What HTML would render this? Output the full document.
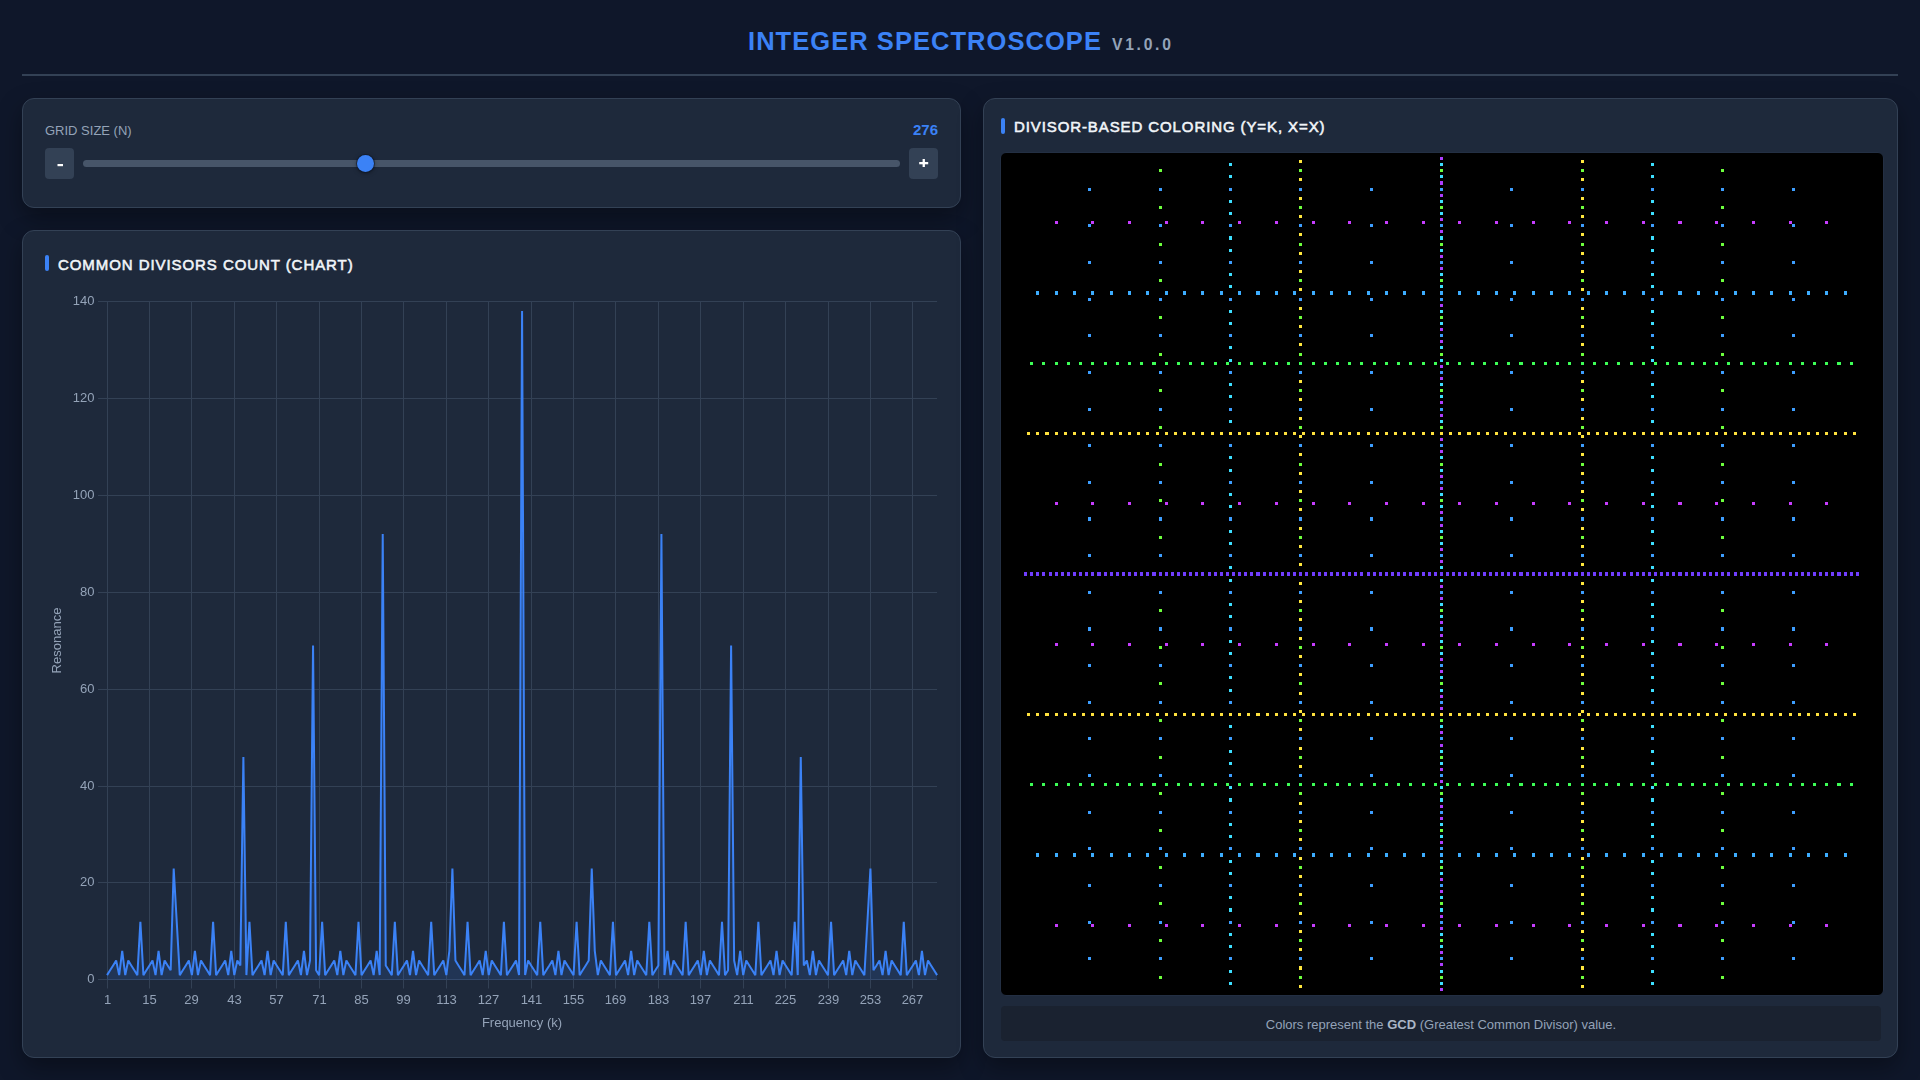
<!DOCTYPE html>
<html><head><meta charset="utf-8"><title>Integer Spectroscope</title>
<style>
*{box-sizing:border-box;margin:0;padding:0}
html,body{width:1920px;height:1080px;overflow:hidden;background:#0f172a;font-family:"Liberation Sans",sans-serif}
.panel{position:absolute;background:#1e293b;border:1px solid #334155;border-radius:12px;box-shadow:0 10px 25px rgba(0,0,0,0.35)}
.hr{position:absolute;left:22px;top:74px;width:1876px;height:2px;background:#334155}
.btn{position:absolute;width:29px;height:31px;background:#334155;border-radius:4px}
.track{position:absolute;left:83px;top:160px;width:817px;height:7px;background:#475569;border-radius:4px}
.thumb{position:absolute;left:357px;top:155px;width:17px;height:17px;border-radius:50%;background:#3b82f6;box-shadow:0 0 0 1px rgba(15,23,42,0.6),0 1px 4px rgba(0,0,0,0.5)}
.canvasbox{position:absolute;left:1000px;top:152px;width:884px;height:844px;background:#000;border:1px solid #232f43;border-radius:6px}
.foot{position:absolute;left:1001px;top:1006px;width:880px;height:35px;background:#1a2230;border-radius:4px}
svg{position:absolute;left:0;top:0}
.tk{font-family:"Liberation Sans",sans-serif;font-size:13px;fill:#94a3b8}
</style></head><body>
<div class="hr"></div>
<div class="panel" style="left:22px;top:98px;width:939px;height:110px"></div>
<div class="panel" style="left:22px;top:230px;width:939px;height:828px"></div>
<div class="panel" style="left:983px;top:98px;width:915px;height:960px"></div>
<div class="btn" style="left:45px;top:148px"></div>
<div class="btn" style="left:909px;top:148px"></div>
<div class="track"></div>
<div class="thumb"></div>
<div class="canvasbox"></div>
<div class="foot"></div>
<svg width="1920" height="1080" viewBox="0 0 1920 1080">
<text x="748" y="50.3" font-family="Liberation Sans" font-weight="bold" font-size="25.5" letter-spacing="1.05" fill="#3b82f6">INTEGER SPECTROSCOPE</text>
<text x="1112" y="50.3" font-family="Liberation Sans" font-weight="bold" font-size="15.7" letter-spacing="2.7" fill="#94a3b8">V1.0.0</text>
<text x="45" y="134.8" font-family="Liberation Sans" font-size="13" fill="#94a3b8">GRID SIZE (N)</text>
<text x="938" y="135" text-anchor="end" font-family="Liberation Sans" font-weight="bold" font-size="15" fill="#3b82f6">276</text>
<rect x="57.5" y="164" width="5.5" height="2.2" fill="#ffffff"/>
<rect x="919.2" y="162" width="9" height="2.3" fill="#ffffff"/>
<rect x="922.6" y="159" width="2.3" height="8" fill="#ffffff"/>
<rect x="45" y="255" width="4" height="16" rx="2" fill="#3b82f6"/>
<text x="58" y="270" font-family="Liberation Sans" font-size="15" letter-spacing="0.93" fill="#f1f5f9" stroke="#f1f5f9" stroke-width="0.55">COMMON DIVISORS COUNT (CHART)</text>
<rect x="1001" y="118" width="4" height="16" rx="2" fill="#3b82f6"/>
<text x="1014" y="132" font-family="Liberation Sans" font-size="15" letter-spacing="0.9" fill="#f1f5f9" stroke="#f1f5f9" stroke-width="0.55">DIVISOR-BASED COLORING (Y=K, X=X)</text>
<text x="1441" y="1029" text-anchor="middle" font-family="Liberation Sans" font-size="13" fill="#94a3b8">Colors represent the <tspan font-weight="bold" fill="#aab6c6">GCD</tspan> (Greatest Common Divisor) value.</text>
</svg>
<svg width="1920" height="1080" viewBox="0 0 1920 1080" style="will-change:transform">
<line x1="98" y1="979.5" x2="937.0882000000001" y2="979.5" stroke="#334155" stroke-width="1"/>
<text x="94.5" y="982.8" text-anchor="end" class="tk">0</text>
<line x1="98" y1="882.5" x2="937.0882000000001" y2="882.5" stroke="#334155" stroke-width="1"/>
<text x="94.5" y="885.8" text-anchor="end" class="tk">20</text>
<line x1="98" y1="786.5" x2="937.0882000000001" y2="786.5" stroke="#334155" stroke-width="1"/>
<text x="94.5" y="789.8" text-anchor="end" class="tk">40</text>
<line x1="98" y1="689.5" x2="937.0882000000001" y2="689.5" stroke="#334155" stroke-width="1"/>
<text x="94.5" y="692.8" text-anchor="end" class="tk">60</text>
<line x1="98" y1="592.5" x2="937.0882000000001" y2="592.5" stroke="#334155" stroke-width="1"/>
<text x="94.5" y="595.8" text-anchor="end" class="tk">80</text>
<line x1="98" y1="495.5" x2="937.0882000000001" y2="495.5" stroke="#334155" stroke-width="1"/>
<text x="94.5" y="498.8" text-anchor="end" class="tk">100</text>
<line x1="98" y1="398.5" x2="937.0882000000001" y2="398.5" stroke="#334155" stroke-width="1"/>
<text x="94.5" y="401.8" text-anchor="end" class="tk">120</text>
<line x1="98" y1="301.5" x2="937.0882000000001" y2="301.5" stroke="#334155" stroke-width="1"/>
<text x="94.5" y="304.8" text-anchor="end" class="tk">140</text>
<line x1="107.5" y1="301.2" x2="107.5" y2="988.5" stroke="#334155" stroke-width="1"/>
<text x="107.5" y="1004" text-anchor="middle" class="tk">1</text>
<line x1="149.5" y1="301.2" x2="149.5" y2="988.5" stroke="#334155" stroke-width="1"/>
<text x="149.5" y="1004" text-anchor="middle" class="tk">15</text>
<line x1="191.5" y1="301.2" x2="191.5" y2="988.5" stroke="#334155" stroke-width="1"/>
<text x="191.5" y="1004" text-anchor="middle" class="tk">29</text>
<line x1="234.5" y1="301.2" x2="234.5" y2="988.5" stroke="#334155" stroke-width="1"/>
<text x="234.5" y="1004" text-anchor="middle" class="tk">43</text>
<line x1="276.5" y1="301.2" x2="276.5" y2="988.5" stroke="#334155" stroke-width="1"/>
<text x="276.5" y="1004" text-anchor="middle" class="tk">57</text>
<line x1="319.5" y1="301.2" x2="319.5" y2="988.5" stroke="#334155" stroke-width="1"/>
<text x="319.5" y="1004" text-anchor="middle" class="tk">71</text>
<line x1="361.5" y1="301.2" x2="361.5" y2="988.5" stroke="#334155" stroke-width="1"/>
<text x="361.5" y="1004" text-anchor="middle" class="tk">85</text>
<line x1="403.5" y1="301.2" x2="403.5" y2="988.5" stroke="#334155" stroke-width="1"/>
<text x="403.5" y="1004" text-anchor="middle" class="tk">99</text>
<line x1="446.5" y1="301.2" x2="446.5" y2="988.5" stroke="#334155" stroke-width="1"/>
<text x="446.5" y="1004" text-anchor="middle" class="tk">113</text>
<line x1="488.5" y1="301.2" x2="488.5" y2="988.5" stroke="#334155" stroke-width="1"/>
<text x="488.5" y="1004" text-anchor="middle" class="tk">127</text>
<line x1="531.5" y1="301.2" x2="531.5" y2="988.5" stroke="#334155" stroke-width="1"/>
<text x="531.5" y="1004" text-anchor="middle" class="tk">141</text>
<line x1="573.5" y1="301.2" x2="573.5" y2="988.5" stroke="#334155" stroke-width="1"/>
<text x="573.5" y="1004" text-anchor="middle" class="tk">155</text>
<line x1="615.5" y1="301.2" x2="615.5" y2="988.5" stroke="#334155" stroke-width="1"/>
<text x="615.5" y="1004" text-anchor="middle" class="tk">169</text>
<line x1="658.5" y1="301.2" x2="658.5" y2="988.5" stroke="#334155" stroke-width="1"/>
<text x="658.5" y="1004" text-anchor="middle" class="tk">183</text>
<line x1="700.5" y1="301.2" x2="700.5" y2="988.5" stroke="#334155" stroke-width="1"/>
<text x="700.5" y="1004" text-anchor="middle" class="tk">197</text>
<line x1="743.5" y1="301.2" x2="743.5" y2="988.5" stroke="#334155" stroke-width="1"/>
<text x="743.5" y="1004" text-anchor="middle" class="tk">211</text>
<line x1="785.5" y1="301.2" x2="785.5" y2="988.5" stroke="#334155" stroke-width="1"/>
<text x="785.5" y="1004" text-anchor="middle" class="tk">225</text>
<line x1="828.5" y1="301.2" x2="828.5" y2="988.5" stroke="#334155" stroke-width="1"/>
<text x="828.5" y="1004" text-anchor="middle" class="tk">239</text>
<line x1="870.5" y1="301.2" x2="870.5" y2="988.5" stroke="#334155" stroke-width="1"/>
<text x="870.5" y="1004" text-anchor="middle" class="tk">253</text>
<line x1="912.5" y1="301.2" x2="912.5" y2="988.5" stroke="#334155" stroke-width="1"/>
<text x="912.5" y="1004" text-anchor="middle" class="tk">267</text>
<polygon points="107.06,979.95 107.06,975.10 110.09,970.25 113.12,965.41 116.15,960.56 119.18,975.10 122.21,950.86 125.24,975.10 128.27,960.56 131.29,965.41 134.32,970.25 137.35,975.10 140.38,921.77 143.41,975.10 146.44,970.25 149.47,965.41 152.50,960.56 155.53,975.10 158.56,950.86 161.59,975.10 164.62,960.56 167.65,965.41 170.68,970.25 173.70,868.44 176.73,921.77 179.76,975.10 182.79,970.25 185.82,965.41 188.85,960.56 191.88,975.10 194.91,950.86 197.94,975.10 200.97,960.56 204.00,965.41 207.03,970.25 210.06,975.10 213.09,921.77 216.11,975.10 219.14,970.25 222.17,965.41 225.20,960.56 228.23,975.10 231.26,950.86 234.29,975.10 237.32,960.56 240.35,965.41 243.38,756.93 246.41,975.10 249.44,921.77 252.47,975.10 255.50,970.25 258.53,965.41 261.55,960.56 264.58,975.10 267.61,950.86 270.64,975.10 273.67,960.56 276.70,965.41 279.73,970.25 282.76,975.10 285.79,921.77 288.82,975.10 291.85,970.25 294.88,965.41 297.91,960.56 300.94,975.10 303.96,950.86 306.99,975.10 310.02,960.56 313.05,645.42 316.08,970.25 319.11,975.10 322.14,921.77 325.17,975.10 328.20,970.25 331.23,965.41 334.26,960.56 337.29,975.10 340.32,950.86 343.35,975.10 346.37,960.56 349.40,965.41 352.43,970.25 355.46,975.10 358.49,921.77 361.52,975.10 364.55,970.25 367.58,965.41 370.61,960.56 373.64,975.10 376.67,950.86 379.70,975.10 382.73,533.91 385.76,965.41 388.78,970.25 391.81,975.10 394.84,921.77 397.87,975.10 400.90,970.25 403.93,965.41 406.96,960.56 409.99,975.10 413.02,950.86 416.05,975.10 419.08,960.56 422.11,965.41 425.14,970.25 428.17,975.10 431.20,921.77 434.22,975.10 437.25,970.25 440.28,965.41 443.31,960.56 446.34,975.10 449.37,950.86 452.40,868.44 455.43,960.56 458.46,965.41 461.49,970.25 464.52,975.10 467.55,921.77 470.58,975.10 473.61,970.25 476.63,965.41 479.66,960.56 482.69,975.10 485.72,950.86 488.75,975.10 491.78,960.56 494.81,965.41 497.84,970.25 500.87,975.10 503.90,921.77 506.93,975.10 509.96,970.25 512.99,965.41 516.02,960.56 519.04,975.10 522.07,310.90 525.10,975.10 528.13,960.56 531.16,965.41 534.19,970.25 537.22,975.10 540.25,921.77 543.28,975.10 546.31,970.25 549.34,965.41 552.37,960.56 555.40,975.10 558.43,950.86 561.46,975.10 564.48,960.56 567.51,965.41 570.54,970.25 573.57,975.10 576.60,921.77 579.63,975.10 582.66,970.25 585.69,965.41 588.72,960.56 591.75,868.44 594.78,950.86 597.81,975.10 600.84,960.56 603.87,965.41 606.89,970.25 609.92,975.10 612.95,921.77 615.98,975.10 619.01,970.25 622.04,965.41 625.07,960.56 628.10,975.10 631.13,950.86 634.16,975.10 637.19,960.56 640.22,965.41 643.25,970.25 646.28,975.10 649.30,921.77 652.33,975.10 655.36,970.25 658.39,965.41 661.42,533.91 664.45,975.10 667.48,950.86 670.51,975.10 673.54,960.56 676.57,965.41 679.60,970.25 682.63,975.10 685.66,921.77 688.69,975.10 691.71,970.25 694.74,965.41 697.77,960.56 700.80,975.10 703.83,950.86 706.86,975.10 709.89,960.56 712.92,965.41 715.95,970.25 718.98,975.10 722.01,921.77 725.04,975.10 728.07,970.25 731.10,645.42 734.13,960.56 737.15,975.10 740.18,950.86 743.21,975.10 746.24,960.56 749.27,965.41 752.30,970.25 755.33,975.10 758.36,921.77 761.39,975.10 764.42,970.25 767.45,965.41 770.48,960.56 773.51,975.10 776.54,950.86 779.56,975.10 782.59,960.56 785.62,965.41 788.65,970.25 791.68,975.10 794.71,921.77 797.74,975.10 800.77,756.93 803.80,965.41 806.83,960.56 809.86,975.10 812.89,950.86 815.92,975.10 818.95,960.56 821.97,965.41 825.00,970.25 828.03,975.10 831.06,921.77 834.09,975.10 837.12,970.25 840.15,965.41 843.18,960.56 846.21,975.10 849.24,950.86 852.27,975.10 855.30,960.56 858.33,965.41 861.36,970.25 864.39,975.10 867.41,921.77 870.44,868.44 873.47,970.25 876.50,965.41 879.53,960.56 882.56,975.10 885.59,950.86 888.62,975.10 891.65,960.56 894.68,965.41 897.71,970.25 900.74,975.10 903.77,921.77 906.80,975.10 909.82,970.25 912.85,965.41 915.88,960.56 918.91,975.10 921.94,950.86 924.97,975.10 928.00,960.56 931.03,965.41 934.06,970.25 937.09,975.10 937.09,979.95" fill="rgba(59,130,246,0.14)"/>
<polyline points="107.06,975.10 110.09,970.25 113.12,965.41 116.15,960.56 119.18,975.10 122.21,950.86 125.24,975.10 128.27,960.56 131.29,965.41 134.32,970.25 137.35,975.10 140.38,921.77 143.41,975.10 146.44,970.25 149.47,965.41 152.50,960.56 155.53,975.10 158.56,950.86 161.59,975.10 164.62,960.56 167.65,965.41 170.68,970.25 173.70,868.44 176.73,921.77 179.76,975.10 182.79,970.25 185.82,965.41 188.85,960.56 191.88,975.10 194.91,950.86 197.94,975.10 200.97,960.56 204.00,965.41 207.03,970.25 210.06,975.10 213.09,921.77 216.11,975.10 219.14,970.25 222.17,965.41 225.20,960.56 228.23,975.10 231.26,950.86 234.29,975.10 237.32,960.56 240.35,965.41 243.38,756.93 246.41,975.10 249.44,921.77 252.47,975.10 255.50,970.25 258.53,965.41 261.55,960.56 264.58,975.10 267.61,950.86 270.64,975.10 273.67,960.56 276.70,965.41 279.73,970.25 282.76,975.10 285.79,921.77 288.82,975.10 291.85,970.25 294.88,965.41 297.91,960.56 300.94,975.10 303.96,950.86 306.99,975.10 310.02,960.56 313.05,645.42 316.08,970.25 319.11,975.10 322.14,921.77 325.17,975.10 328.20,970.25 331.23,965.41 334.26,960.56 337.29,975.10 340.32,950.86 343.35,975.10 346.37,960.56 349.40,965.41 352.43,970.25 355.46,975.10 358.49,921.77 361.52,975.10 364.55,970.25 367.58,965.41 370.61,960.56 373.64,975.10 376.67,950.86 379.70,975.10 382.73,533.91 385.76,965.41 388.78,970.25 391.81,975.10 394.84,921.77 397.87,975.10 400.90,970.25 403.93,965.41 406.96,960.56 409.99,975.10 413.02,950.86 416.05,975.10 419.08,960.56 422.11,965.41 425.14,970.25 428.17,975.10 431.20,921.77 434.22,975.10 437.25,970.25 440.28,965.41 443.31,960.56 446.34,975.10 449.37,950.86 452.40,868.44 455.43,960.56 458.46,965.41 461.49,970.25 464.52,975.10 467.55,921.77 470.58,975.10 473.61,970.25 476.63,965.41 479.66,960.56 482.69,975.10 485.72,950.86 488.75,975.10 491.78,960.56 494.81,965.41 497.84,970.25 500.87,975.10 503.90,921.77 506.93,975.10 509.96,970.25 512.99,965.41 516.02,960.56 519.04,975.10 522.07,310.90 525.10,975.10 528.13,960.56 531.16,965.41 534.19,970.25 537.22,975.10 540.25,921.77 543.28,975.10 546.31,970.25 549.34,965.41 552.37,960.56 555.40,975.10 558.43,950.86 561.46,975.10 564.48,960.56 567.51,965.41 570.54,970.25 573.57,975.10 576.60,921.77 579.63,975.10 582.66,970.25 585.69,965.41 588.72,960.56 591.75,868.44 594.78,950.86 597.81,975.10 600.84,960.56 603.87,965.41 606.89,970.25 609.92,975.10 612.95,921.77 615.98,975.10 619.01,970.25 622.04,965.41 625.07,960.56 628.10,975.10 631.13,950.86 634.16,975.10 637.19,960.56 640.22,965.41 643.25,970.25 646.28,975.10 649.30,921.77 652.33,975.10 655.36,970.25 658.39,965.41 661.42,533.91 664.45,975.10 667.48,950.86 670.51,975.10 673.54,960.56 676.57,965.41 679.60,970.25 682.63,975.10 685.66,921.77 688.69,975.10 691.71,970.25 694.74,965.41 697.77,960.56 700.80,975.10 703.83,950.86 706.86,975.10 709.89,960.56 712.92,965.41 715.95,970.25 718.98,975.10 722.01,921.77 725.04,975.10 728.07,970.25 731.10,645.42 734.13,960.56 737.15,975.10 740.18,950.86 743.21,975.10 746.24,960.56 749.27,965.41 752.30,970.25 755.33,975.10 758.36,921.77 761.39,975.10 764.42,970.25 767.45,965.41 770.48,960.56 773.51,975.10 776.54,950.86 779.56,975.10 782.59,960.56 785.62,965.41 788.65,970.25 791.68,975.10 794.71,921.77 797.74,975.10 800.77,756.93 803.80,965.41 806.83,960.56 809.86,975.10 812.89,950.86 815.92,975.10 818.95,960.56 821.97,965.41 825.00,970.25 828.03,975.10 831.06,921.77 834.09,975.10 837.12,970.25 840.15,965.41 843.18,960.56 846.21,975.10 849.24,950.86 852.27,975.10 855.30,960.56 858.33,965.41 861.36,970.25 864.39,975.10 867.41,921.77 870.44,868.44 873.47,970.25 876.50,965.41 879.53,960.56 882.56,975.10 885.59,950.86 888.62,975.10 891.65,960.56 894.68,965.41 897.71,970.25 900.74,975.10 903.77,921.77 906.80,975.10 909.82,970.25 912.85,965.41 915.88,960.56 918.91,975.10 921.94,950.86 924.97,975.10 928.00,960.56 931.03,965.41 934.06,970.25 937.09,975.10" fill="none" stroke="#3b82f6" stroke-width="2" stroke-linejoin="bevel"/>
<text x="522" y="1027" text-anchor="middle" class="tk">Frequency (k)</text>
<text transform="translate(61,640.5) rotate(-90)" text-anchor="middle" class="tk">Resonance</text>
</svg>
<svg width="1920" height="1080" viewBox="0 0 1920 1080">
<g shape-rendering="crispEdges">
<path fill="#ae3dff" d="M1440 157h3v3h-3zM1440 181h3v4h-3zM1440 194h3v3h-3zM1440 218h3v3h-3zM1440 230h3v3h-3zM1440 255h3v3h-3zM1440 267h3v3h-3zM1440 304h3v3h-3zM1440 328h3v3h-3zM1440 340h3v3h-3zM1440 365h3v3h-3zM1440 377h3v3h-3zM1440 401h3v3h-3zM1440 414h3v3h-3zM1440 438h3v3h-3zM1440 450h3v3h-3zM1440 475h3v3h-3zM1440 487h3v3h-3zM1440 511h3v3h-3zM1440 524h3v3h-3zM1440 548h3v3h-3zM1440 560h3v3h-3zM1440 585h3v3h-3zM1440 597h3v3h-3zM1440 621h3v3h-3zM1440 634h3v3h-3zM1440 658h3v3h-3zM1440 670h3v3h-3zM1440 695h3v3h-3zM1440 707h3v3h-3zM1440 731h3v3h-3zM1440 744h3v3h-3zM1440 768h3v3h-3zM1440 780h3v3h-3zM1440 805h3v3h-3zM1440 817h3v3h-3zM1440 841h3v3h-3zM1440 878h3v3h-3zM1440 890h3v3h-3zM1440 915h3v3h-3zM1440 927h3v3h-3zM1440 951h3v3h-3zM1440 963h3v3h-3zM1440 988h3v3h-3z"/>
<path fill="#ffe73d" d="M1299 160h3v3h-3zM1581 160h3v3h-3zM1299 178h3v3h-3zM1581 178h3v3h-3zM1299 197h3v3h-3zM1581 197h3v3h-3zM1299 215h3v3h-3zM1581 215h3v3h-3zM1299 233h3v3h-3zM1581 233h3v3h-3zM1299 252h3v3h-3zM1581 252h3v3h-3zM1299 270h3v3h-3zM1581 270h3v3h-3zM1299 288h3v3h-3zM1581 288h3v3h-3zM1299 307h3v3h-3zM1581 307h3v3h-3zM1299 325h3v3h-3zM1581 325h3v3h-3zM1299 343h3v3h-3zM1581 343h3v3h-3zM1299 380h3v3h-3zM1581 380h3v3h-3zM1299 398h3v3h-3zM1581 398h3v3h-3zM1299 417h3v3h-3zM1581 417h3v3h-3zM1299 435h3v3h-3zM1581 435h3v3h-3zM1299 453h3v3h-3zM1581 453h3v3h-3zM1299 472h3v3h-3zM1581 472h3v3h-3zM1299 490h3v3h-3zM1581 490h3v3h-3zM1299 508h3v3h-3zM1581 508h3v3h-3zM1299 527h3v3h-3zM1581 527h3v3h-3zM1299 545h3v3h-3zM1581 545h3v3h-3zM1299 563h3v3h-3zM1581 563h3v3h-3zM1299 582h3v3h-3zM1581 582h3v3h-3zM1299 600h3v3h-3zM1581 600h3v3h-3zM1299 618h3v3h-3zM1581 618h3v3h-3zM1299 637h3v3h-3zM1581 637h3v3h-3zM1299 655h3v3h-3zM1581 655h3v3h-3zM1299 673h3v3h-3zM1581 673h3v3h-3zM1299 692h3v3h-3zM1581 692h3v3h-3zM1299 710h3v3h-3zM1581 710h3v3h-3zM1299 728h3v3h-3zM1581 728h3v3h-3zM1299 747h3v3h-3zM1581 747h3v3h-3zM1299 765h3v3h-3zM1581 765h3v3h-3zM1299 802h3v3h-3zM1581 802h3v3h-3zM1299 820h3v3h-3zM1581 820h3v3h-3zM1299 838h3v3h-3zM1581 838h3v3h-3zM1299 857h3v3h-3zM1581 857h3v3h-3zM1299 875h3v3h-3zM1581 875h3v3h-3zM1299 893h3v3h-3zM1581 893h3v3h-3zM1299 912h3v3h-3zM1581 912h3v3h-3zM1299 930h3v3h-3zM1581 930h3v3h-3zM1299 948h3v3h-3zM1581 948h3v3h-3zM1299 966h3v4h-3zM1581 966h3v4h-3zM1299 985h3v3h-3zM1581 985h3v3h-3z"/>
<path fill="#3ddfff" d="M1229 163h3v3h-3zM1440 163h3v3h-3zM1651 163h3v3h-3zM1229 175h3v3h-3zM1440 175h3v3h-3zM1651 175h3v3h-3zM1229 200h3v3h-3zM1440 200h3v3h-3zM1651 200h3v3h-3zM1229 212h3v3h-3zM1440 212h3v3h-3zM1651 212h3v3h-3zM1229 236h3v4h-3zM1440 236h3v4h-3zM1651 236h3v4h-3zM1229 249h3v3h-3zM1440 249h3v3h-3zM1651 249h3v3h-3zM1229 273h3v3h-3zM1440 273h3v3h-3zM1651 273h3v3h-3zM1229 285h3v3h-3zM1440 285h3v3h-3zM1651 285h3v3h-3zM1229 310h3v3h-3zM1440 310h3v3h-3zM1651 310h3v3h-3zM1229 322h3v3h-3zM1440 322h3v3h-3zM1651 322h3v3h-3zM1229 346h3v3h-3zM1440 346h3v3h-3zM1651 346h3v3h-3zM1229 359h3v3h-3zM1440 359h3v3h-3zM1651 359h3v3h-3zM1229 383h3v3h-3zM1440 383h3v3h-3zM1651 383h3v3h-3zM1229 395h3v3h-3zM1440 395h3v3h-3zM1651 395h3v3h-3zM1229 420h3v3h-3zM1440 420h3v3h-3zM1651 420h3v3h-3zM1229 456h3v3h-3zM1440 456h3v3h-3zM1651 456h3v3h-3zM1229 469h3v3h-3zM1440 469h3v3h-3zM1651 469h3v3h-3zM1229 493h3v3h-3zM1440 493h3v3h-3zM1651 493h3v3h-3zM1229 505h3v3h-3zM1440 505h3v3h-3zM1651 505h3v3h-3zM1229 530h3v3h-3zM1440 530h3v3h-3zM1651 530h3v3h-3zM1229 542h3v3h-3zM1440 542h3v3h-3zM1651 542h3v3h-3zM1229 566h3v3h-3zM1440 566h3v3h-3zM1651 566h3v3h-3zM1229 579h3v3h-3zM1440 579h3v3h-3zM1651 579h3v3h-3zM1229 603h3v3h-3zM1440 603h3v3h-3zM1651 603h3v3h-3zM1229 615h3v3h-3zM1440 615h3v3h-3zM1651 615h3v3h-3zM1229 640h3v3h-3zM1440 640h3v3h-3zM1651 640h3v3h-3zM1229 652h3v3h-3zM1440 652h3v3h-3zM1651 652h3v3h-3zM1229 676h3v3h-3zM1440 676h3v3h-3zM1651 676h3v3h-3zM1229 689h3v3h-3zM1440 689h3v3h-3zM1651 689h3v3h-3zM1229 725h3v3h-3zM1440 725h3v3h-3zM1651 725h3v3h-3zM1229 750h3v3h-3zM1440 750h3v3h-3zM1651 750h3v3h-3zM1229 762h3v3h-3zM1440 762h3v3h-3zM1651 762h3v3h-3zM1229 786h3v3h-3zM1440 786h3v3h-3zM1651 786h3v3h-3zM1229 798h3v4h-3zM1440 798h3v4h-3zM1651 798h3v4h-3zM1229 823h3v3h-3zM1440 823h3v3h-3zM1651 823h3v3h-3zM1229 835h3v3h-3zM1440 835h3v3h-3zM1651 835h3v3h-3zM1229 860h3v3h-3zM1440 860h3v3h-3zM1651 860h3v3h-3zM1229 872h3v3h-3zM1440 872h3v3h-3zM1651 872h3v3h-3zM1229 896h3v3h-3zM1440 896h3v3h-3zM1651 896h3v3h-3zM1229 908h3v4h-3zM1440 908h3v4h-3zM1651 908h3v4h-3zM1229 933h3v3h-3zM1440 933h3v3h-3zM1651 933h3v3h-3zM1229 945h3v3h-3zM1440 945h3v3h-3zM1651 945h3v3h-3zM1229 970h3v3h-3zM1440 970h3v3h-3zM1651 970h3v3h-3zM1229 982h3v3h-3zM1440 982h3v3h-3zM1651 982h3v3h-3z"/>
<path fill="#6dff3d" d="M1159 169h3v3h-3zM1299 169h3v3h-3zM1440 169h3v3h-3zM1581 169h3v3h-3zM1721 169h3v3h-3zM1159 206h3v3h-3zM1299 206h3v3h-3zM1440 206h3v3h-3zM1581 206h3v3h-3zM1721 206h3v3h-3zM1159 243h3v3h-3zM1299 243h3v3h-3zM1440 243h3v3h-3zM1581 243h3v3h-3zM1721 243h3v3h-3zM1159 279h3v3h-3zM1299 279h3v3h-3zM1440 279h3v3h-3zM1581 279h3v3h-3zM1721 279h3v3h-3zM1159 316h3v3h-3zM1299 316h3v3h-3zM1440 316h3v3h-3zM1581 316h3v3h-3zM1721 316h3v3h-3zM1159 353h3v3h-3zM1299 353h3v3h-3zM1440 353h3v3h-3zM1581 353h3v3h-3zM1721 353h3v3h-3zM1159 389h3v3h-3zM1299 389h3v3h-3zM1440 389h3v3h-3zM1581 389h3v3h-3zM1721 389h3v3h-3zM1159 426h3v3h-3zM1299 426h3v3h-3zM1440 426h3v3h-3zM1581 426h3v3h-3zM1721 426h3v3h-3zM1159 463h3v3h-3zM1299 463h3v3h-3zM1440 463h3v3h-3zM1581 463h3v3h-3zM1721 463h3v3h-3zM1159 499h3v3h-3zM1299 499h3v3h-3zM1440 499h3v3h-3zM1581 499h3v3h-3zM1721 499h3v3h-3zM1159 536h3v3h-3zM1299 536h3v3h-3zM1440 536h3v3h-3zM1581 536h3v3h-3zM1721 536h3v3h-3zM1159 609h3v3h-3zM1299 609h3v3h-3zM1440 609h3v3h-3zM1581 609h3v3h-3zM1721 609h3v3h-3zM1159 646h3v3h-3zM1299 646h3v3h-3zM1440 646h3v3h-3zM1581 646h3v3h-3zM1721 646h3v3h-3zM1159 682h3v3h-3zM1299 682h3v3h-3zM1440 682h3v3h-3zM1581 682h3v3h-3zM1721 682h3v3h-3zM1159 719h3v3h-3zM1299 719h3v3h-3zM1440 719h3v3h-3zM1581 719h3v3h-3zM1721 719h3v3h-3zM1159 756h3v3h-3zM1299 756h3v3h-3zM1440 756h3v3h-3zM1581 756h3v3h-3zM1721 756h3v3h-3zM1159 792h3v3h-3zM1299 792h3v3h-3zM1440 792h3v3h-3zM1581 792h3v3h-3zM1721 792h3v3h-3zM1159 829h3v3h-3zM1299 829h3v3h-3zM1440 829h3v3h-3zM1581 829h3v3h-3zM1721 829h3v3h-3zM1159 866h3v3h-3zM1299 866h3v3h-3zM1440 866h3v3h-3zM1581 866h3v3h-3zM1721 866h3v3h-3zM1159 902h3v3h-3zM1299 902h3v3h-3zM1440 902h3v3h-3zM1581 902h3v3h-3zM1721 902h3v3h-3zM1159 939h3v3h-3zM1299 939h3v3h-3zM1440 939h3v3h-3zM1581 939h3v3h-3zM1721 939h3v3h-3zM1159 976h3v3h-3zM1299 976h3v3h-3zM1440 976h3v3h-3zM1581 976h3v3h-3zM1721 976h3v3h-3z"/>
<path fill="#3d9eff" d="M1088 188h3v3h-3zM1159 188h3v3h-3zM1229 188h3v3h-3zM1299 188h3v3h-3zM1370 188h3v3h-3zM1440 188h3v3h-3zM1510 188h3v3h-3zM1581 188h3v3h-3zM1651 188h3v3h-3zM1721 188h3v3h-3zM1792 188h3v3h-3zM1088 224h3v3h-3zM1159 224h3v3h-3zM1229 224h3v3h-3zM1299 224h3v3h-3zM1370 224h3v3h-3zM1440 224h3v3h-3zM1510 224h3v3h-3zM1581 224h3v3h-3zM1651 224h3v3h-3zM1721 224h3v3h-3zM1792 224h3v3h-3zM1088 261h3v3h-3zM1159 261h3v3h-3zM1229 261h3v3h-3zM1299 261h3v3h-3zM1370 261h3v3h-3zM1440 261h3v3h-3zM1510 261h3v3h-3zM1581 261h3v3h-3zM1651 261h3v3h-3zM1721 261h3v3h-3zM1792 261h3v3h-3zM1088 298h3v3h-3zM1159 298h3v3h-3zM1229 298h3v3h-3zM1299 298h3v3h-3zM1370 298h3v3h-3zM1440 298h3v3h-3zM1510 298h3v3h-3zM1581 298h3v3h-3zM1651 298h3v3h-3zM1721 298h3v3h-3zM1792 298h3v3h-3zM1088 334h3v3h-3zM1159 334h3v3h-3zM1229 334h3v3h-3zM1299 334h3v3h-3zM1370 334h3v3h-3zM1440 334h3v3h-3zM1510 334h3v3h-3zM1581 334h3v3h-3zM1651 334h3v3h-3zM1721 334h3v3h-3zM1792 334h3v3h-3zM1088 371h3v3h-3zM1159 371h3v3h-3zM1229 371h3v3h-3zM1299 371h3v3h-3zM1370 371h3v3h-3zM1440 371h3v3h-3zM1510 371h3v3h-3zM1581 371h3v3h-3zM1651 371h3v3h-3zM1721 371h3v3h-3zM1792 371h3v3h-3zM1088 408h3v3h-3zM1159 408h3v3h-3zM1229 408h3v3h-3zM1299 408h3v3h-3zM1370 408h3v3h-3zM1440 408h3v3h-3zM1510 408h3v3h-3zM1581 408h3v3h-3zM1651 408h3v3h-3zM1721 408h3v3h-3zM1792 408h3v3h-3zM1088 444h3v3h-3zM1159 444h3v3h-3zM1229 444h3v3h-3zM1299 444h3v3h-3zM1370 444h3v3h-3zM1440 444h3v3h-3zM1510 444h3v3h-3zM1581 444h3v3h-3zM1651 444h3v3h-3zM1721 444h3v3h-3zM1792 444h3v3h-3zM1088 481h3v3h-3zM1159 481h3v3h-3zM1229 481h3v3h-3zM1299 481h3v3h-3zM1370 481h3v3h-3zM1440 481h3v3h-3zM1510 481h3v3h-3zM1581 481h3v3h-3zM1651 481h3v3h-3zM1721 481h3v3h-3zM1792 481h3v3h-3zM1088 517h3v4h-3zM1159 517h3v4h-3zM1229 517h3v4h-3zM1299 517h3v4h-3zM1370 517h3v4h-3zM1440 517h3v4h-3zM1510 517h3v4h-3zM1581 517h3v4h-3zM1651 517h3v4h-3zM1721 517h3v4h-3zM1792 517h3v4h-3zM1088 554h3v3h-3zM1159 554h3v3h-3zM1229 554h3v3h-3zM1299 554h3v3h-3zM1370 554h3v3h-3zM1440 554h3v3h-3zM1510 554h3v3h-3zM1581 554h3v3h-3zM1651 554h3v3h-3zM1721 554h3v3h-3zM1792 554h3v3h-3zM1088 591h3v3h-3zM1159 591h3v3h-3zM1229 591h3v3h-3zM1299 591h3v3h-3zM1370 591h3v3h-3zM1440 591h3v3h-3zM1510 591h3v3h-3zM1581 591h3v3h-3zM1651 591h3v3h-3zM1721 591h3v3h-3zM1792 591h3v3h-3zM1088 627h3v4h-3zM1159 627h3v4h-3zM1229 627h3v4h-3zM1299 627h3v4h-3zM1370 627h3v4h-3zM1440 627h3v4h-3zM1510 627h3v4h-3zM1581 627h3v4h-3zM1651 627h3v4h-3zM1721 627h3v4h-3zM1792 627h3v4h-3zM1088 664h3v3h-3zM1159 664h3v3h-3zM1229 664h3v3h-3zM1299 664h3v3h-3zM1370 664h3v3h-3zM1440 664h3v3h-3zM1510 664h3v3h-3zM1581 664h3v3h-3zM1651 664h3v3h-3zM1721 664h3v3h-3zM1792 664h3v3h-3zM1088 701h3v3h-3zM1159 701h3v3h-3zM1229 701h3v3h-3zM1299 701h3v3h-3zM1370 701h3v3h-3zM1440 701h3v3h-3zM1510 701h3v3h-3zM1581 701h3v3h-3zM1651 701h3v3h-3zM1721 701h3v3h-3zM1792 701h3v3h-3zM1088 737h3v3h-3zM1159 737h3v3h-3zM1229 737h3v3h-3zM1299 737h3v3h-3zM1370 737h3v3h-3zM1440 737h3v3h-3zM1510 737h3v3h-3zM1581 737h3v3h-3zM1651 737h3v3h-3zM1721 737h3v3h-3zM1792 737h3v3h-3zM1088 774h3v3h-3zM1159 774h3v3h-3zM1229 774h3v3h-3zM1299 774h3v3h-3zM1370 774h3v3h-3zM1440 774h3v3h-3zM1510 774h3v3h-3zM1581 774h3v3h-3zM1651 774h3v3h-3zM1721 774h3v3h-3zM1792 774h3v3h-3zM1088 811h3v3h-3zM1159 811h3v3h-3zM1229 811h3v3h-3zM1299 811h3v3h-3zM1370 811h3v3h-3zM1440 811h3v3h-3zM1510 811h3v3h-3zM1581 811h3v3h-3zM1651 811h3v3h-3zM1721 811h3v3h-3zM1792 811h3v3h-3zM1088 847h3v3h-3zM1159 847h3v3h-3zM1229 847h3v3h-3zM1299 847h3v3h-3zM1370 847h3v3h-3zM1440 847h3v3h-3zM1510 847h3v3h-3zM1581 847h3v3h-3zM1651 847h3v3h-3zM1721 847h3v3h-3zM1792 847h3v3h-3zM1088 884h3v3h-3zM1159 884h3v3h-3zM1229 884h3v3h-3zM1299 884h3v3h-3zM1370 884h3v3h-3zM1440 884h3v3h-3zM1510 884h3v3h-3zM1581 884h3v3h-3zM1651 884h3v3h-3zM1721 884h3v3h-3zM1792 884h3v3h-3zM1088 921h3v3h-3zM1159 921h3v3h-3zM1229 921h3v3h-3zM1299 921h3v3h-3zM1370 921h3v3h-3zM1440 921h3v3h-3zM1510 921h3v3h-3zM1581 921h3v3h-3zM1651 921h3v3h-3zM1721 921h3v3h-3zM1792 921h3v3h-3zM1088 957h3v3h-3zM1159 957h3v3h-3zM1229 957h3v3h-3zM1299 957h3v3h-3zM1370 957h3v3h-3zM1440 957h3v3h-3zM1510 957h3v3h-3zM1581 957h3v3h-3zM1651 957h3v3h-3zM1721 957h3v3h-3zM1792 957h3v3h-3z"/>
<path fill="#c73dff" d="M1055 221h3v3h-3zM1091 221h3v3h-3zM1128 221h3v3h-3zM1165 221h3v3h-3zM1201 221h3v3h-3zM1238 221h3v3h-3zM1275 221h3v3h-3zM1312 221h3v3h-3zM1348 221h3v3h-3zM1385 221h3v3h-3zM1422 221h3v3h-3zM1458 221h3v3h-3zM1495 221h3v3h-3zM1532 221h3v3h-3zM1568 221h3v3h-3zM1605 221h3v3h-3zM1642 221h3v3h-3zM1678 221h4v3h-4zM1715 221h3v3h-3zM1752 221h3v3h-3zM1789 221h3v3h-3zM1825 221h3v3h-3zM1055 502h3v3h-3zM1091 502h3v3h-3zM1128 502h3v3h-3zM1165 502h3v3h-3zM1201 502h3v3h-3zM1238 502h3v3h-3zM1275 502h3v3h-3zM1312 502h3v3h-3zM1348 502h3v3h-3zM1385 502h3v3h-3zM1422 502h3v3h-3zM1458 502h3v3h-3zM1495 502h3v3h-3zM1532 502h3v3h-3zM1568 502h3v3h-3zM1605 502h3v3h-3zM1642 502h3v3h-3zM1678 502h4v3h-4zM1715 502h3v3h-3zM1752 502h3v3h-3zM1789 502h3v3h-3zM1825 502h3v3h-3zM1055 643h3v3h-3zM1091 643h3v3h-3zM1128 643h3v3h-3zM1165 643h3v3h-3zM1201 643h3v3h-3zM1238 643h3v3h-3zM1275 643h3v3h-3zM1312 643h3v3h-3zM1348 643h3v3h-3zM1385 643h3v3h-3zM1422 643h3v3h-3zM1458 643h3v3h-3zM1495 643h3v3h-3zM1532 643h3v3h-3zM1568 643h3v3h-3zM1605 643h3v3h-3zM1642 643h3v3h-3zM1678 643h4v3h-4zM1715 643h3v3h-3zM1752 643h3v3h-3zM1789 643h3v3h-3zM1825 643h3v3h-3zM1055 924h3v3h-3zM1091 924h3v3h-3zM1128 924h3v3h-3zM1165 924h3v3h-3zM1201 924h3v3h-3zM1238 924h3v3h-3zM1275 924h3v3h-3zM1312 924h3v3h-3zM1348 924h3v3h-3zM1385 924h3v3h-3zM1422 924h3v3h-3zM1458 924h3v3h-3zM1495 924h3v3h-3zM1532 924h3v3h-3zM1568 924h3v3h-3zM1605 924h3v3h-3zM1642 924h3v3h-3zM1678 924h4v3h-4zM1715 924h3v3h-3zM1752 924h3v3h-3zM1789 924h3v3h-3zM1825 924h3v3h-3z"/>
<path fill="#3dadff" d="M1036 291h3v4h-3zM1055 291h3v4h-3zM1073 291h3v4h-3zM1091 291h3v4h-3zM1110 291h3v4h-3zM1128 291h3v4h-3zM1146 291h3v4h-3zM1165 291h3v4h-3zM1183 291h3v4h-3zM1201 291h3v4h-3zM1220 291h3v4h-3zM1238 291h3v4h-3zM1256 291h4v4h-4zM1275 291h3v4h-3zM1293 291h3v4h-3zM1312 291h3v4h-3zM1330 291h3v4h-3zM1348 291h3v4h-3zM1367 291h3v4h-3zM1385 291h3v4h-3zM1403 291h3v4h-3zM1422 291h3v4h-3zM1440 291h3v4h-3zM1458 291h3v4h-3zM1477 291h3v4h-3zM1495 291h3v4h-3zM1513 291h3v4h-3zM1532 291h3v4h-3zM1550 291h3v4h-3zM1568 291h3v4h-3zM1587 291h3v4h-3zM1605 291h3v4h-3zM1623 291h3v4h-3zM1642 291h3v4h-3zM1660 291h3v4h-3zM1678 291h4v4h-4zM1697 291h3v4h-3zM1715 291h3v4h-3zM1734 291h3v4h-3zM1752 291h3v4h-3zM1770 291h3v4h-3zM1789 291h3v4h-3zM1807 291h3v4h-3zM1825 291h3v4h-3zM1844 291h3v4h-3zM1036 853h3v4h-3zM1055 853h3v4h-3zM1073 853h3v4h-3zM1091 853h3v4h-3zM1110 853h3v4h-3zM1128 853h3v4h-3zM1146 853h3v4h-3zM1165 853h3v4h-3zM1183 853h3v4h-3zM1201 853h3v4h-3zM1220 853h3v4h-3zM1238 853h3v4h-3zM1256 853h4v4h-4zM1275 853h3v4h-3zM1293 853h3v4h-3zM1312 853h3v4h-3zM1330 853h3v4h-3zM1348 853h3v4h-3zM1367 853h3v4h-3zM1385 853h3v4h-3zM1403 853h3v4h-3zM1422 853h3v4h-3zM1440 853h3v4h-3zM1458 853h3v4h-3zM1477 853h3v4h-3zM1495 853h3v4h-3zM1513 853h3v4h-3zM1532 853h3v4h-3zM1550 853h3v4h-3zM1568 853h3v4h-3zM1587 853h3v4h-3zM1605 853h3v4h-3zM1623 853h3v4h-3zM1642 853h3v4h-3zM1660 853h3v4h-3zM1678 853h4v4h-4zM1697 853h3v4h-3zM1715 853h3v4h-3zM1734 853h3v4h-3zM1752 853h3v4h-3zM1770 853h3v4h-3zM1789 853h3v4h-3zM1807 853h3v4h-3zM1825 853h3v4h-3zM1844 853h3v4h-3z"/>
<path fill="#3dff57" d="M1030 362h3v3h-3zM1042 362h3v3h-3zM1055 362h3v3h-3zM1067 362h3v3h-3zM1079 362h3v3h-3zM1091 362h3v3h-3zM1104 362h3v3h-3zM1116 362h3v3h-3zM1128 362h3v3h-3zM1140 362h3v3h-3zM1152 362h4v3h-4zM1165 362h3v3h-3zM1177 362h3v3h-3zM1189 362h3v3h-3zM1201 362h3v3h-3zM1214 362h3v3h-3zM1226 362h3v3h-3zM1238 362h3v3h-3zM1250 362h3v3h-3zM1263 362h3v3h-3zM1275 362h3v3h-3zM1287 362h3v3h-3zM1299 362h3v3h-3zM1312 362h3v3h-3zM1324 362h3v3h-3zM1336 362h3v3h-3zM1348 362h3v3h-3zM1360 362h3v3h-3zM1373 362h3v3h-3zM1385 362h3v3h-3zM1397 362h3v3h-3zM1409 362h3v3h-3zM1422 362h3v3h-3zM1434 362h3v3h-3zM1446 362h3v3h-3zM1458 362h3v3h-3zM1471 362h3v3h-3zM1483 362h3v3h-3zM1495 362h3v3h-3zM1507 362h3v3h-3zM1519 362h4v3h-4zM1532 362h3v3h-3zM1544 362h3v3h-3zM1556 362h3v3h-3zM1568 362h3v3h-3zM1581 362h3v3h-3zM1593 362h3v3h-3zM1605 362h3v3h-3zM1617 362h3v3h-3zM1630 362h3v3h-3zM1642 362h3v3h-3zM1654 362h3v3h-3zM1666 362h3v3h-3zM1678 362h4v3h-4zM1691 362h3v3h-3zM1703 362h3v3h-3zM1715 362h3v3h-3zM1727 362h3v3h-3zM1740 362h3v3h-3zM1752 362h3v3h-3zM1764 362h3v3h-3zM1776 362h3v3h-3zM1789 362h3v3h-3zM1801 362h3v3h-3zM1813 362h3v3h-3zM1825 362h3v3h-3zM1837 362h4v3h-4zM1850 362h3v3h-3zM1030 783h3v3h-3zM1042 783h3v3h-3zM1055 783h3v3h-3zM1067 783h3v3h-3zM1079 783h3v3h-3zM1091 783h3v3h-3zM1104 783h3v3h-3zM1116 783h3v3h-3zM1128 783h3v3h-3zM1140 783h3v3h-3zM1152 783h4v3h-4zM1165 783h3v3h-3zM1177 783h3v3h-3zM1189 783h3v3h-3zM1201 783h3v3h-3zM1214 783h3v3h-3zM1226 783h3v3h-3zM1238 783h3v3h-3zM1250 783h3v3h-3zM1263 783h3v3h-3zM1275 783h3v3h-3zM1287 783h3v3h-3zM1299 783h3v3h-3zM1312 783h3v3h-3zM1324 783h3v3h-3zM1336 783h3v3h-3zM1348 783h3v3h-3zM1360 783h3v3h-3zM1373 783h3v3h-3zM1385 783h3v3h-3zM1397 783h3v3h-3zM1409 783h3v3h-3zM1422 783h3v3h-3zM1434 783h3v3h-3zM1446 783h3v3h-3zM1458 783h3v3h-3zM1471 783h3v3h-3zM1483 783h3v3h-3zM1495 783h3v3h-3zM1507 783h3v3h-3zM1519 783h4v3h-4zM1532 783h3v3h-3zM1544 783h3v3h-3zM1556 783h3v3h-3zM1568 783h3v3h-3zM1581 783h3v3h-3zM1593 783h3v3h-3zM1605 783h3v3h-3zM1617 783h3v3h-3zM1630 783h3v3h-3zM1642 783h3v3h-3zM1654 783h3v3h-3zM1666 783h3v3h-3zM1678 783h4v3h-4zM1691 783h3v3h-3zM1703 783h3v3h-3zM1715 783h3v3h-3zM1727 783h3v3h-3zM1740 783h3v3h-3zM1752 783h3v3h-3zM1764 783h3v3h-3zM1776 783h3v3h-3zM1789 783h3v3h-3zM1801 783h3v3h-3zM1813 783h3v3h-3zM1825 783h3v3h-3zM1837 783h4v3h-4zM1850 783h3v3h-3z"/>
<path fill="#ffe13d" d="M1027 432h3v3h-3zM1036 432h3v3h-3zM1045 432h4v3h-4zM1055 432h3v3h-3zM1064 432h3v3h-3zM1073 432h3v3h-3zM1082 432h3v3h-3zM1091 432h3v3h-3zM1101 432h3v3h-3zM1110 432h3v3h-3zM1119 432h3v3h-3zM1128 432h3v3h-3zM1137 432h3v3h-3zM1146 432h3v3h-3zM1156 432h3v3h-3zM1165 432h3v3h-3zM1174 432h3v3h-3zM1183 432h3v3h-3zM1192 432h3v3h-3zM1201 432h3v3h-3zM1211 432h3v3h-3zM1220 432h3v3h-3zM1229 432h3v3h-3zM1238 432h3v3h-3zM1247 432h3v3h-3zM1256 432h4v3h-4zM1266 432h3v3h-3zM1275 432h3v3h-3zM1284 432h3v3h-3zM1293 432h3v3h-3zM1302 432h3v3h-3zM1312 432h3v3h-3zM1321 432h3v3h-3zM1330 432h3v3h-3zM1339 432h3v3h-3zM1348 432h3v3h-3zM1357 432h3v3h-3zM1367 432h3v3h-3zM1376 432h3v3h-3zM1385 432h3v3h-3zM1394 432h3v3h-3zM1403 432h3v3h-3zM1412 432h3v3h-3zM1422 432h3v3h-3zM1431 432h3v3h-3zM1440 432h3v3h-3zM1449 432h3v3h-3zM1458 432h3v3h-3zM1467 432h4v3h-4zM1477 432h3v3h-3zM1486 432h3v3h-3zM1495 432h3v3h-3zM1504 432h3v3h-3zM1513 432h3v3h-3zM1523 432h3v3h-3zM1532 432h3v3h-3zM1541 432h3v3h-3zM1550 432h3v3h-3zM1559 432h3v3h-3zM1568 432h3v3h-3zM1578 432h3v3h-3zM1587 432h3v3h-3zM1596 432h3v3h-3zM1605 432h3v3h-3zM1614 432h3v3h-3zM1623 432h3v3h-3zM1633 432h3v3h-3zM1642 432h3v3h-3zM1651 432h3v3h-3zM1660 432h3v3h-3zM1669 432h3v3h-3zM1678 432h4v3h-4zM1688 432h3v3h-3zM1697 432h3v3h-3zM1706 432h3v3h-3zM1715 432h3v3h-3zM1724 432h3v3h-3zM1734 432h3v3h-3zM1743 432h3v3h-3zM1752 432h3v3h-3zM1761 432h3v3h-3zM1770 432h3v3h-3zM1779 432h3v3h-3zM1789 432h3v3h-3zM1798 432h3v3h-3zM1807 432h3v3h-3zM1816 432h3v3h-3zM1825 432h3v3h-3zM1834 432h3v3h-3zM1844 432h3v3h-3zM1853 432h3v3h-3zM1027 713h3v3h-3zM1036 713h3v3h-3zM1045 713h4v3h-4zM1055 713h3v3h-3zM1064 713h3v3h-3zM1073 713h3v3h-3zM1082 713h3v3h-3zM1091 713h3v3h-3zM1101 713h3v3h-3zM1110 713h3v3h-3zM1119 713h3v3h-3zM1128 713h3v3h-3zM1137 713h3v3h-3zM1146 713h3v3h-3zM1156 713h3v3h-3zM1165 713h3v3h-3zM1174 713h3v3h-3zM1183 713h3v3h-3zM1192 713h3v3h-3zM1201 713h3v3h-3zM1211 713h3v3h-3zM1220 713h3v3h-3zM1229 713h3v3h-3zM1238 713h3v3h-3zM1247 713h3v3h-3zM1256 713h4v3h-4zM1266 713h3v3h-3zM1275 713h3v3h-3zM1284 713h3v3h-3zM1293 713h3v3h-3zM1302 713h3v3h-3zM1312 713h3v3h-3zM1321 713h3v3h-3zM1330 713h3v3h-3zM1339 713h3v3h-3zM1348 713h3v3h-3zM1357 713h3v3h-3zM1367 713h3v3h-3zM1376 713h3v3h-3zM1385 713h3v3h-3zM1394 713h3v3h-3zM1403 713h3v3h-3zM1412 713h3v3h-3zM1422 713h3v3h-3zM1431 713h3v3h-3zM1440 713h3v3h-3zM1449 713h3v3h-3zM1458 713h3v3h-3zM1467 713h4v3h-4zM1477 713h3v3h-3zM1486 713h3v3h-3zM1495 713h3v3h-3zM1504 713h3v3h-3zM1513 713h3v3h-3zM1523 713h3v3h-3zM1532 713h3v3h-3zM1541 713h3v3h-3zM1550 713h3v3h-3zM1559 713h3v3h-3zM1568 713h3v3h-3zM1578 713h3v3h-3zM1587 713h3v3h-3zM1596 713h3v3h-3zM1605 713h3v3h-3zM1614 713h3v3h-3zM1623 713h3v3h-3zM1633 713h3v3h-3zM1642 713h3v3h-3zM1651 713h3v3h-3zM1660 713h3v3h-3zM1669 713h3v3h-3zM1678 713h4v3h-4zM1688 713h3v3h-3zM1697 713h3v3h-3zM1706 713h3v3h-3zM1715 713h3v3h-3zM1724 713h3v3h-3zM1734 713h3v3h-3zM1743 713h3v3h-3zM1752 713h3v3h-3zM1761 713h3v3h-3zM1770 713h3v3h-3zM1779 713h3v3h-3zM1789 713h3v3h-3zM1798 713h3v3h-3zM1807 713h3v3h-3zM1816 713h3v3h-3zM1825 713h3v3h-3zM1834 713h3v3h-3zM1844 713h3v3h-3zM1853 713h3v3h-3z"/>
<path fill="#713dff" d="M1024 572h3v4h-3zM1030 572h3v4h-3zM1036 572h3v4h-3zM1042 572h3v4h-3zM1049 572h3v4h-3zM1055 572h3v4h-3zM1061 572h3v4h-3zM1067 572h3v4h-3zM1073 572h3v4h-3zM1079 572h3v4h-3zM1085 572h3v4h-3zM1091 572h3v4h-3zM1097 572h4v4h-4zM1104 572h3v4h-3zM1110 572h3v4h-3zM1116 572h3v4h-3zM1122 572h3v4h-3zM1128 572h3v4h-3zM1134 572h3v4h-3zM1140 572h3v4h-3zM1146 572h3v4h-3zM1152 572h4v4h-4zM1159 572h3v4h-3zM1165 572h3v4h-3zM1171 572h3v4h-3zM1177 572h3v4h-3zM1183 572h3v4h-3zM1189 572h3v4h-3zM1195 572h3v4h-3zM1201 572h3v4h-3zM1208 572h3v4h-3zM1214 572h3v4h-3zM1220 572h3v4h-3zM1226 572h3v4h-3zM1232 572h3v4h-3zM1238 572h3v4h-3zM1244 572h3v4h-3zM1250 572h3v4h-3zM1256 572h4v4h-4zM1263 572h3v4h-3zM1269 572h3v4h-3zM1275 572h3v4h-3zM1281 572h3v4h-3zM1287 572h3v4h-3zM1293 572h3v4h-3zM1299 572h3v4h-3zM1305 572h3v4h-3zM1312 572h3v4h-3zM1318 572h3v4h-3zM1324 572h3v4h-3zM1330 572h3v4h-3zM1336 572h3v4h-3zM1342 572h3v4h-3zM1348 572h3v4h-3zM1354 572h3v4h-3zM1360 572h3v4h-3zM1367 572h3v4h-3zM1373 572h3v4h-3zM1379 572h3v4h-3zM1385 572h3v4h-3zM1391 572h3v4h-3zM1397 572h3v4h-3zM1403 572h3v4h-3zM1409 572h3v4h-3zM1415 572h4v4h-4zM1422 572h3v4h-3zM1428 572h3v4h-3zM1434 572h3v4h-3zM1440 572h3v4h-3zM1446 572h3v4h-3zM1452 572h3v4h-3zM1458 572h3v4h-3zM1464 572h3v4h-3zM1471 572h3v4h-3zM1477 572h3v4h-3zM1483 572h3v4h-3zM1489 572h3v4h-3zM1495 572h3v4h-3zM1501 572h3v4h-3zM1507 572h3v4h-3zM1513 572h3v4h-3zM1519 572h4v4h-4zM1526 572h3v4h-3zM1532 572h3v4h-3zM1538 572h3v4h-3zM1544 572h3v4h-3zM1550 572h3v4h-3zM1556 572h3v4h-3zM1562 572h3v4h-3zM1568 572h3v4h-3zM1574 572h4v4h-4zM1581 572h3v4h-3zM1587 572h3v4h-3zM1593 572h3v4h-3zM1599 572h3v4h-3zM1605 572h3v4h-3zM1611 572h3v4h-3zM1617 572h3v4h-3zM1623 572h3v4h-3zM1630 572h3v4h-3zM1636 572h3v4h-3zM1642 572h3v4h-3zM1648 572h3v4h-3zM1654 572h3v4h-3zM1660 572h3v4h-3zM1666 572h3v4h-3zM1672 572h3v4h-3zM1678 572h4v4h-4zM1685 572h3v4h-3zM1691 572h3v4h-3zM1697 572h3v4h-3zM1703 572h3v4h-3zM1709 572h3v4h-3zM1715 572h3v4h-3zM1721 572h3v4h-3zM1727 572h3v4h-3zM1734 572h3v4h-3zM1740 572h3v4h-3zM1746 572h3v4h-3zM1752 572h3v4h-3zM1758 572h3v4h-3zM1764 572h3v4h-3zM1770 572h3v4h-3zM1776 572h3v4h-3zM1782 572h3v4h-3zM1789 572h3v4h-3zM1795 572h3v4h-3zM1801 572h3v4h-3zM1807 572h3v4h-3zM1813 572h3v4h-3zM1819 572h3v4h-3zM1825 572h3v4h-3zM1831 572h3v4h-3zM1837 572h4v4h-4zM1844 572h3v4h-3zM1850 572h3v4h-3zM1856 572h3v4h-3z"/>
</g>
</svg>
</body></html>
